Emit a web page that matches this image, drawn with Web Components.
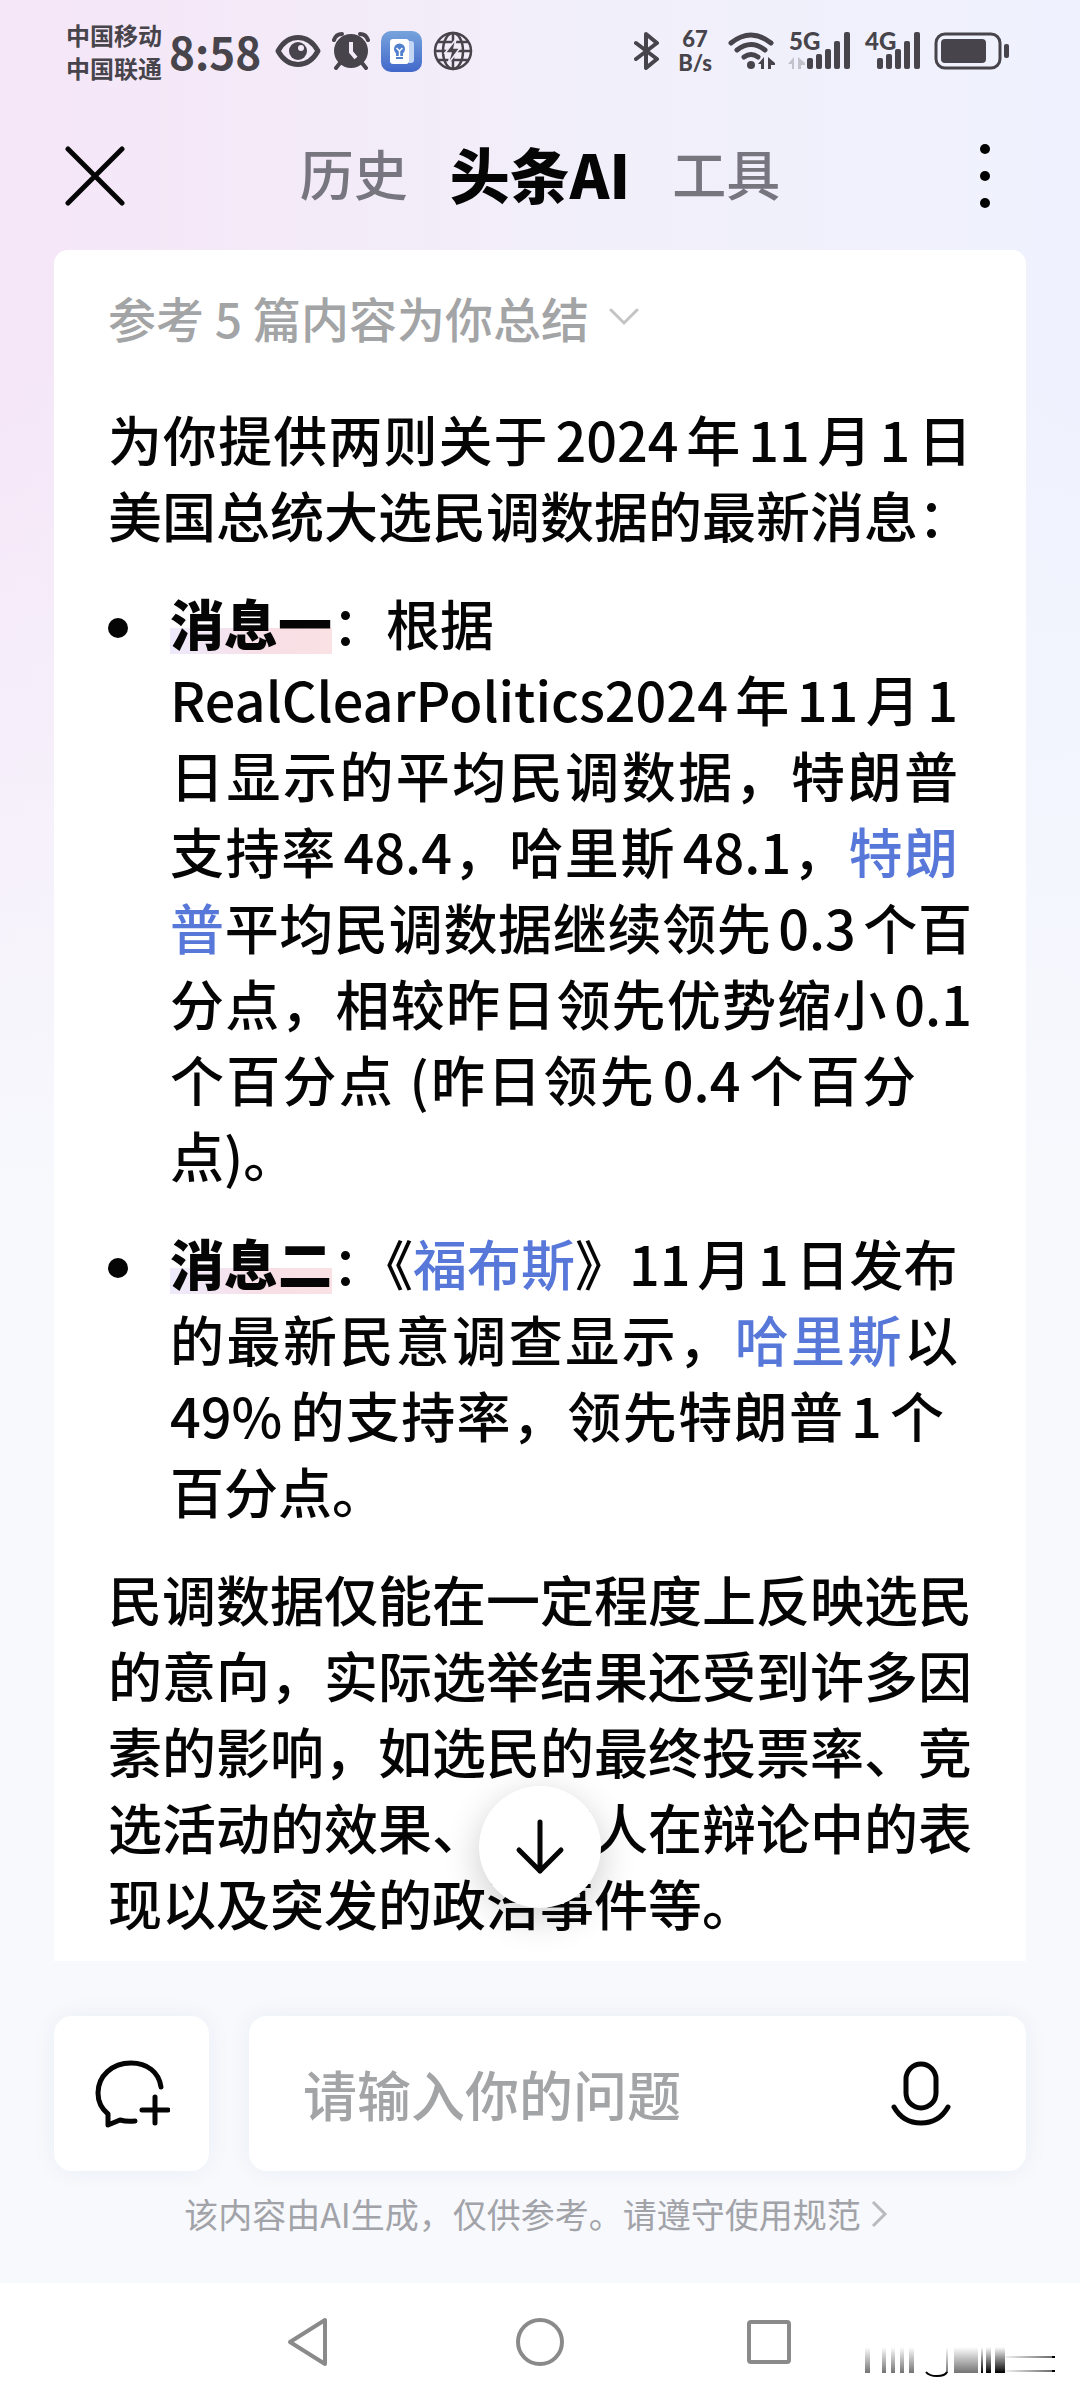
<!DOCTYPE html>
<html lang="zh-CN">
<head>
    <meta charset="UTF-8">
    <meta name="viewport" content="width=device-width, initial-scale=1">
    <title>头条AI</title>
    <style>
        body {
            margin: 0;
            font-family: "Noto Sans CJK SC", sans-serif;
            color: #050505;
        }
    </style>
</head>
<body>

<ai-page>
    <status-bar slot="top"></status-bar>
    <app-header slot="top"></app-header>
    <answer-card count="5">
        <answer-text>
            <text-line>为你提供两则关于2024年11月1日</text-line>
            <text-line>美国总统大选民调数据的最新消息：</text-line>
        </answer-text>
        <answer-text bullet>
            <text-line end><mark-title>消息一</mark-title>：根据</text-line>
            <text-line inset="s">RealClearPolitics2024年11月1</text-line>
            <text-line inset="s">日显示的平均民调数据，特朗普</text-line>
            <text-line inset="s">支持率48.4，哈里斯48.1，<word-link>特朗</word-link></text-line>
            <text-line><word-link>普</word-link>平均民调数据继续领先0.3个百</text-line>
            <text-line>分点，相较昨日领先优势缩小0.1</text-line>
            <text-line inset="l">个百分点 (昨日领先0.4个百分</text-line>
            <text-line end>点)。</text-line>
        </answer-text>
        <answer-text bullet>
            <text-line end><mark-title>消息二</mark-title>：《<word-link>福布斯</word-link>》11月1日发布</text-line>
            <text-line inset="s">的最新民意调查显示，<word-link>哈里斯</word-link>以</text-line>
            <text-line inset="m">49%的支持率，领先特朗普1个</text-line>
            <text-line end>百分点。</text-line>
        </answer-text>
        <answer-text>
            <text-line>民调数据仅能在一定程度上反映选民</text-line>
            <text-line>的意向，实际选举结果还受到许多因</text-line>
            <text-line>素的影响，如选民的最终投票率、竞</text-line>
            <text-line>选活动的效果、候选人在辩论中的表</text-line>
            <text-line end>现以及突发的政治事件等。</text-line>
        </answer-text>
    </answer-card>
    <ask-bar slot="bottom" placeholder="请输入你的问题"></ask-bar>
    <nav-bar slot="bottom"></nav-bar>
</ai-page>

<script>
    // 所有组件的基类：把 html() 的内容放进 shadow root
    class BaseElement extends HTMLElement {
        constructor() {
            super();
            this.attachShadow({ mode: 'open' });
        }

        connectedCallback() {
            const template = document.createElement('template');
            const html = `<style>
                *, :host { box-sizing: border-box; }
                svg { display: block; flex: none; }
                button { padding: 0; border: 0; background: none; font: inherit; color: inherit; cursor: pointer; }
            </style>` + this.html();
            // 去掉标签之间的空白，否则行内组件前面会多出一个空格
            template.innerHTML = html.replace(/>\s+</g, '><');
            this.shadowRoot.replaceChildren(template.content.cloneNode(true));
        }
    }

    // 页面骨架
    class AiPage extends BaseElement {
        html() {
            return `
            <style>
                :host {
                    display: flex;
                    flex-direction: column;
                    min-height: 100vh;
                    background:
                        linear-gradient(to bottom, rgba(247, 249, 253, 0) 15%, #f7f9fd 50%),
                        linear-gradient(to right, #f5e6f8, #f4eaf8 25%, #f1effa 55%, #eff2fe);
                }
                main { flex: 1; padding: 0 54px; }
            </style>
            <slot name="top"></slot>
            <main><slot></slot></main>
            <slot name="bottom"></slot>`;
        }
    }

    // 手机状态栏
    class StatusBar extends BaseElement {
        html() {
            return `
            <style>
                :host {
                    display: flex;
                    align-items: center;
                    height: 102px;
                    padding: 0 70px 0 66px;
                    color: #47444b;
                    font-weight: 700;
                }
                .carrier { font-size: 24px; line-height: 33px; }
                .time { margin: 0 14px 0 7px; font-size: 44px; line-height: 44px; }
                .icons { display: flex; align-items: center; gap: 11px; }
                .right { margin-left: auto; gap: 12px; }
                .speed { margin: 0 4px 0 6px; font-size: 22px; line-height: 24px; text-align: center; }
                .speed, .net { font-family: Lato, sans-serif; font-weight: 900; }
            </style>
            <div class="carrier"><div>中国移动</div><div>中国联通</div></div>
            <div class="time">8:58</div>
            <div class="icons">
                <svg width="46" height="32" viewBox="0 0 46 32"><path d="M3 16C13-2 33-2 43 16C33 34 13 34 3 16Z" fill="none" stroke="currentColor" stroke-width="5" stroke-linejoin="round"/><circle cx="23" cy="16" r="9" fill="currentColor"/><circle cx="26" cy="13" r="3" fill="#f3ebf8"/></svg>
                <svg width="38" height="38" viewBox="0 0 38 38"><circle cx="19" cy="19" r="17" fill="currentColor"/><path d="M2 8Q4 2 10 2M28 2Q34 2 36 8M8 31L4 36M30 31L34 36" fill="none" stroke="currentColor" stroke-width="4" stroke-linecap="round"/><path d="M19 10V20L24 26" fill="none" stroke="#f3ebf8" stroke-width="4"/></svg>
                <svg width="41" height="41" viewBox="0 0 41 41"><defs><linearGradient id="book" x2="0" y2="1"><stop stop-color="#77a3dc"/><stop offset="1" stop-color="#4168ca"/></linearGradient></defs><rect width="41" height="41" rx="10" fill="url(#book)"/><path d="M28 10h2q3 0 3 3v16q0 3-3 3h-2z" fill="#c3d6f4"/><rect x="9" y="8" width="19" height="25" rx="3" fill="#fff"/><circle cx="18.500" cy="18" r="5.500" fill="#4f7fcd"/><path d="M15 21h7v4h-7zM15 26h7v2h-7z" fill="#4f7fcd"/><path d="M15.500 17l3 3 3-3M18.500 20v5" stroke="#fff" stroke-width="1.500" fill="none"/></svg>
                <svg width="40" height="40" viewBox="0 0 40 40"><g fill="none" stroke="currentColor" stroke-width="2.500"><circle cx="20" cy="20" r="18"/><ellipse cx="20" cy="20" rx="10" ry="18"/><path d="M2 20H38M5 11H35M5 29H35M20 2V38"/></g><path d="M23 8L12 22H18L15 33L27 17H21Z" fill="currentColor" stroke="#f2ecf8" stroke-width="1.500"/></svg>
            </div>
            <div class="icons right">
                <svg width="26" height="40" viewBox="0 0 26 40"><path d="M2 12L23 28L12 37V3L23 12L2 28" fill="none" stroke="currentColor" stroke-width="4" stroke-linejoin="round" stroke-linecap="round"/></svg>
                <div class="speed"><div>67</div><div>B/s</div></div>
                <svg width="48" height="38" viewBox="0 0 48 38"><g fill="none" stroke="currentColor" stroke-width="5" stroke-linecap="round"><path d="M3 11Q23-5 43 11M9 18Q23 7 37 18M16 25Q23 20 30 25"/></g><circle cx="23" cy="33" r="4" fill="currentColor"/><path d="M30 32L36 25V37H33V32ZM40 25L47 31V33H43V37H40Z" fill="currentColor"/></svg>
                <svg class="net" width="64" height="60" viewBox="0 -10 64 60"><text x="1" y="19" font-size="24" fill="currentColor">5G</text><g fill="currentColor"><rect x="19" y="27" width="6" height="11" rx="2"/><rect x="28" y="23" width="6" height="15" rx="2"/><rect x="37" y="18" width="6" height="20" rx="2"/><rect x="46" y="10" width="6" height="28" rx="2"/><rect x="56" y="1" width="6" height="37" rx="2"/></g><path d="M0 33L6 26V38H4V33ZM10 26L17 32V34H13V38H10Z" fill="#c3c2cb"/></svg>
                <svg class="net" width="58" height="60" viewBox="0 -10 58 60"><text x="1" y="19" font-size="24" fill="currentColor">4G</text><g fill="currentColor"><rect x="13" y="27" width="6" height="11" rx="2"/><rect x="22" y="23" width="6" height="15" rx="2"/><rect x="31" y="18" width="6" height="20" rx="2"/><rect x="40" y="10" width="6" height="28" rx="2"/><rect x="50" y="1" width="6" height="37" rx="2"/></g></svg>
                <svg width="76" height="38" viewBox="0 0 76 38"><rect x="2" y="2" width="64" height="34" rx="9" fill="none" stroke="currentColor" stroke-width="3"/><rect x="7" y="7" width="45" height="24" rx="4" fill="currentColor"/><rect x="70" y="12" width="5" height="14" rx="2" fill="currentColor"/></svg>
            </div>`;
        }
    }

    // 顶部标签栏
    class AppHeader extends BaseElement {
        html() {
            return `
            <style>
                :host {
                    display: grid;
                    grid-template-columns: 60px 1fr 60px;
                    align-items: center;
                    height: 148px;
                    padding: 0 65px;
                }
                nav { display: flex; justify-content: center; align-items: center; gap: 42px; padding-bottom: 6px; line-height: 72px; }
                nav button { font-size: 54px; font-weight: 500; color: #77757e; }
                nav button[aria-current] { font-size: 60px; font-weight: 900; color: #050505; }
                .more { justify-self: end; }
            </style>
            <button aria-label="关闭"><svg width="60" height="60" viewBox="0 0 60 60"><path d="M3 3L57 57M57 3L3 57" stroke="currentColor" stroke-width="5" stroke-linecap="round"/></svg></button>
            <nav>
                <button>历史</button>
                <button aria-current="page">头条AI</button>
                <button>工具</button>
            </nav>
            <button class="more" aria-label="更多"><svg width="60" height="64" viewBox="0 0 60 64"><circle cx="30" cy="5" r="5"/><circle cx="30" cy="32" r="5"/><circle cx="30" cy="59" r="5"/></svg></button>`;
        }
    }

    // 回答卡片
    class AnswerCard extends BaseElement {
        html() {
            return `
            <style>
                :host {
                    position: relative;
                    display: block;
                    padding: 43px 54px 20px;
                    border-radius: 14px 14px 0 0;
                    background: #fff;
                }
                .source {
                    display: flex;
                    align-items: center;
                    gap: 20px;
                    margin-bottom: 60px;
                    font-size: 48px;
                    font-weight: 500;
                    line-height: 48px;
                    color: #a3a4a6;
                }
                .content { display: flex; flex-direction: column; gap: 32px; }
                /* 回到底部按钮，浮在正文上方 */
                .down {
                    position: absolute;
                    left: calc(50% - 61px);
                    bottom: 53px;
                    display: grid;
                    place-items: center;
                    width: 122px;
                    height: 122px;
                    border-radius: 50%;
                    background: #fff;
                    box-shadow: 0 10px 36px rgba(0, 0, 0, .2);
                }
            </style>
            <button class="source"><span>参考 ${this.getAttribute('count')} 篇内容为你总结</span>
                <svg width="30" height="18" viewBox="0 0 30 18"><path d="M2 2L15 15L28 2" fill="none" stroke="#c4c4c6" stroke-width="3" stroke-linecap="round"/></svg>
            </button>
            <div class="content"><slot></slot></div>
            <button class="down" aria-label="滚动到底部"><svg width="50" height="56" viewBox="0 0 50 56"><path d="M25 3V52M4 31L25 52L46 31" fill="none" stroke="currentColor" stroke-width="5" stroke-linecap="round" stroke-linejoin="round"/></svg></button>`;
        }
    }

    // 一个段落，加 bullet 属性后变成列表项
    class AnswerText extends BaseElement {
        html() {
            return `
            <style>
                :host { display: block; font-size: 54px; line-height: 76px; font-weight: 500; }
                :host([bullet]) { display: grid; grid-template-columns: 20px 1fr; gap: 42px; }
                i { display: none; }
                :host([bullet]) i { display: block; width: 20px; height: 20px; margin-top: 33px; border-radius: 50%; background: #050505; }
            </style>
            <i></i><div><slot></slot></div>`;
        }
    }

    // 段落里的一行，两端对齐；inset 让右边缘收进一些
    class TextLine extends BaseElement {
        html() {
            return `
            <style>
                :host { display: block; text-align: justify; text-align-last: justify; text-autospace: normal; white-space: nowrap; }
                :host([inset="s"]) { padding-right: 14px; }
                :host([inset="m"]) { padding-right: 28px; }
                :host([inset="l"]) { padding-right: 56px; }
                :host([end]) { text-align-last: left; }
            </style>
            <slot></slot>`;
        }
    }

    // 带渐变底色的小标题
    class MarkTitle extends BaseElement {
        html() {
            return `
            <style>
                :host { display: inline; }
                b {
                    font-weight: 900;
                    background: linear-gradient(to right, #eeeafb, #f8dfe6 60%, #f9e1e4) 0 45px / 100% 26px no-repeat;
                }
            </style>
            <b><slot></slot></b>`;
        }
    }

    // 可点击的词条
    class WordLink extends BaseElement {
        html() {
            return `
            <style>
                :host { display: inline; }
                a { color: #5777d9; text-decoration: none; }
            </style>
            <a href="#"><slot></slot></a>`;
        }
    }

    // 底部输入区
    class AskBar extends BaseElement {
        html() {
            return `
            <style>
                :host { display: block; padding: 55px 54px 47px; }
                .row { display: flex; gap: 40px; }
                .new, .box { height: 155px; border-radius: 18px; background: #fff; box-shadow: 0 0 24px rgba(40, 50, 90, .06); }
                .new { display: grid; place-items: center; width: 155px; }
                .box { flex: 1; display: flex; align-items: center; min-width: 0; padding: 0 75px 0 54px; }
                input { flex: 1; min-width: 0; height: 80px; padding: 0; border: 0; outline: 0; background: none; font: inherit; font-size: 54px; font-weight: 500; }
                input::placeholder { color: #a3a4a6; opacity: 1; }
                .tip { display: flex; justify-content: center; align-items: center; gap: 9px; margin: 21px 8px 0 0; font-size: 34px; line-height: 44px; color: #a2a3a8; text-decoration: none; }
            </style>
            <div class="row">
                <button class="new" aria-label="新对话"><svg width="76" height="68" viewBox="0 0 76 68"><path d="M67 27C65 12 53 3 37 3C18 3 4 16 4 33C4 42 8 49 14 54V65L26 60Q33 62 41 61M61 37V63M48 50H74" fill="none" stroke="currentColor" stroke-width="5" stroke-linecap="round" stroke-linejoin="round"/></svg></button>
                <div class="box">
                    <input type="text" aria-label="问题" placeholder="${this.getAttribute('placeholder')}">
                    <button aria-label="语音输入"><svg width="60" height="66" viewBox="0 0 60 66"><rect x="15" y="3" width="30" height="44" rx="15" fill="none" stroke="currentColor" stroke-width="5"/><path d="M3 46Q12 62 30 62Q48 62 57 46" fill="none" stroke="currentColor" stroke-width="5" stroke-linecap="round"/></svg></button>
                </div>
            </div>
            <a class="tip" href="#"><span>该内容由AI生成，仅供参考。请遵守使用规范</span>
                <svg width="18" height="28" viewBox="0 0 18 28"><path d="M3 2L15 14L3 26" fill="none" stroke="#b9bac0" stroke-width="3"/></svg>
            </a>`;
        }
    }

    // 系统导航栏
    class NavBar extends BaseElement {
        html() {
            return `
            <style>
                :host {
                    position: relative;
                    display: flex;
                    justify-content: center;
                    align-items: center;
                    gap: 180px;
                    height: 117px;
                    background: #fff;
                    color: #8a8a8a;
                }
                .smudge { position: absolute; right: 20px; bottom: 20px; }
            </style>
            <button aria-label="返回"><svg width="50" height="52" viewBox="0 0 50 52"><path d="M40 4V48L5 26Z" fill="none" stroke="currentColor" stroke-width="4" stroke-linejoin="round"/></svg></button>
            <button aria-label="主页"><svg width="50" height="52" viewBox="0 0 50 52"><circle cx="25" cy="26" r="22" fill="none" stroke="currentColor" stroke-width="4"/></svg></button>
            <button aria-label="最近任务"><svg width="50" height="52" viewBox="0 0 50 52"><rect x="4" y="6" width="40" height="40" rx="2" fill="none" stroke="currentColor" stroke-width="4"/></svg></button>
            <svg class="smudge" width="195" height="36" viewBox="0 0 195 36">
                <defs>
                    <linearGradient id="down" x2="0" y2="1"><stop stop-color="#000" stop-opacity="0"/><stop offset="1" stop-color="#000" stop-opacity=".55"/></linearGradient>
                    <linearGradient id="dark" x2="0" y2="1"><stop stop-color="#000" stop-opacity="0"/><stop offset="1" stop-color="#000"/></linearGradient>
                    <linearGradient id="side"><stop stop-color="#000" stop-opacity=".05"/><stop offset="1" stop-color="#000" stop-opacity=".6"/></linearGradient>
                </defs>
                <g fill="url(#down)"><rect y="3" width="5" height="26"/><rect x="17" y="3" width="4" height="26"/><rect x="26" y="3" width="4" height="26"/><rect x="35" y="3" width="4" height="26"/><rect x="44" y="3" width="5" height="26"/><rect x="81" y="3" width="2" height="26"/><rect x="89" y="3" width="24" height="26"/></g>
                <g fill="url(#dark)"><rect x="116" y="3" width="2" height="26"/><rect x="121" y="3" width="5" height="26"/><rect x="130" y="3" width="10" height="26"/></g>
                <path d="M61 28Q64 32 72 32Q80 32 82 28" fill="none" stroke="#000" stroke-width="2"/>
                <path d="M140 12h49v2h-49zM140 26h49v2h-49z" fill="url(#side)"/>
                <path d="M187 12h3v2h-3zM187 26h3v2h-3z" fill="#000"/>
            </svg>`;
        }
    }

    window.customElements.define('ai-page', AiPage);
    window.customElements.define('status-bar', StatusBar);
    window.customElements.define('app-header', AppHeader);
    window.customElements.define('answer-card', AnswerCard);
    window.customElements.define('answer-text', AnswerText);
    window.customElements.define('text-line', TextLine);
    window.customElements.define('mark-title', MarkTitle);
    window.customElements.define('word-link', WordLink);
    window.customElements.define('ask-bar', AskBar);
    window.customElements.define('nav-bar', NavBar);
</script>
</body>
</html>
